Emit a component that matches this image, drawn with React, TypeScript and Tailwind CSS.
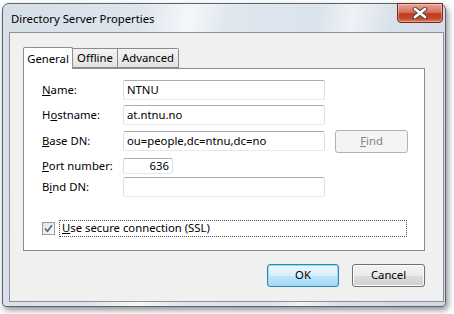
import React from "react";

const font = "font-['Segoe_UI','Noto_Sans','Open_Sans',sans-serif]";

function Field({ width = "w-[202px]", value = "", align = "text-left", height = "h-[20px]" }) {
  return (
    <div
      className={`${width} ${height} flex items-center rounded-[2px] border border-[#abadb3] border-l-[#dbdfe6] border-r-[#dbdfe6] border-b-[#e3e9ef] bg-white px-[3px] ${align}`}
    >
      <span className="w-full leading-none">{value}</span>
    </div>
  );
}

function Label({ children }: { children: React.ReactNode }) {
  return <div className="w-[81px] shrink-0">{children}</div>;
}

function CloseGlyph() {
  return (
    <svg width="16" height="12" viewBox="0 0 16 12">
      <path d="M3 2 L13 10 M13 2 L3 10" stroke="#4a4a4a" strokeWidth="4.6" strokeLinecap="round" />
      <path d="M3 2 L13 10 M13 2 L3 10" stroke="#ffffff" strokeWidth="2.6" strokeLinecap="round" />
    </svg>
  );
}

export default function App() {
  return (
    <div className={`h-[314px] w-[454px] overflow-hidden bg-white pl-[2px] pt-[3px] text-[11.3px] text-black ${font}`}>
      <div className="flex h-[304px] w-[444px] flex-col rounded-t-[7px] rounded-b-[4px] border border-[#5b6570] bg-[linear-gradient(100deg,#d6dee8_0%,#dee5ed_28%,#f4f7fa_38%,#e0e7ef_46%,#dbe3ec_64%,#eef2f6_71%,#d9e1ea_79%,#d0d9e4_100%)] shadow-[2px_3px_6px_rgba(0,0,0,0.45)]">
        {/* title bar */}
        <div className="flex h-[28px] shrink-0 items-start justify-between">
          <span className="pl-[8px] pt-[7px] text-[11.3px] text-black">Directory Server Properties</span>
          <button
            type="button"
            className="mr-[2px] -mt-px flex h-[20px] w-[46px] items-center justify-center rounded-b-[4px] border border-[#6e2a20] bg-[linear-gradient(180deg,#e9a597_0%,#d9715c_45%,#c2391d_55%,#c8472b_80%,#dc7a5c_100%)] shadow-[inset_0_0_0_1px_rgba(255,255,255,0.35)]"
          >
            <CloseGlyph />
          </button>
        </div>

        {/* client area */}
        <div className="mb-[4px] ml-[6px] mr-[1px] flex flex-1 flex-col border border-[#8b9097] bg-[#f0f0f0] pl-[13px] pt-[14px]">
          {/* tabs */}
          <div className="relative z-10 flex h-[21px] items-end">
            <div className="-mb-px flex h-[22px] w-[50px] items-start justify-center rounded-t-[2px] border border-b-0 border-[#898c95] bg-white pt-[3px]">
              General
            </div>
            <div className="flex h-[20px] w-[45px] items-center justify-center border border-l-0 border-[#898c95] bg-[linear-gradient(180deg,#f3f3f3,#e2e2e2)]">
              Offline
            </div>
            <div className="flex h-[20px] w-[61px] items-center justify-center rounded-tr-[2px] border border-l-0 border-[#898c95] bg-[linear-gradient(180deg,#f3f3f3,#e2e2e2)]">
              Advanced
            </div>
          </div>

          {/* panel */}
          <div className="flex h-[183px] w-[402px] flex-col border border-[#898c95] bg-white pl-[18px] pt-[11px]">
            <div className="flex h-[20px] items-center">
              <Label>
                <u>N</u>ame:
              </Label>
              <Field value="NTNU" />
            </div>
            <div className="mt-[5px] flex h-[20px] items-center">
              <Label>
                H<u>o</u>stname:
              </Label>
              <Field value="at.ntnu.no" />
            </div>
            <div className="mt-[6px] flex h-[20px] items-center">
              <Label>
                <u>B</u>ase DN:
              </Label>
              <Field value="ou=people,dc=ntnu,dc=no" />
              <button
                type="button"
                className="ml-[10px] h-[23px] w-[73px] rounded-[3px] border border-[#adb2b5] bg-[#f4f4f4] text-[#838383]"
              >
                <u>F</u>ind
              </button>
            </div>
            <div className="mt-[7px] flex h-[16px] items-center">
              <Label>
                <u>P</u>ort number:
              </Label>
              <Field width="w-[50px]" height="h-[16px]" value="636" align="text-right" />
            </div>
            <div className="mt-[3px] flex h-[20px] items-center">
              <Label>
                B<u>i</u>nd DN:
              </Label>
              <Field />
            </div>
            <div className="mt-[23px] flex h-[17px] items-center">
              <div className="flex h-[13px] w-[13px] shrink-0 items-center justify-center border border-[#9a9a9a] bg-[linear-gradient(135deg,#e2e2e2,#fbfbfb)]">
                <svg width="9" height="9" viewBox="0 0 9 9">
                  <path d="M1 4.5 L3.5 7.2 L8 1.2" fill="none" stroke="#4d6185" strokeWidth="1.6" />
                </svg>
              </div>
              <div className="ml-[4px] flex h-[17px] w-[348px] items-center border border-dotted border-[#555] pl-[2px]">
                <u>U</u>se secure connection (SSL)
              </div>
            </div>
          </div>

          {/* buttons */}
          <div className="mt-[13px] flex w-[402px] justify-end gap-[13px]">
            <button
              type="button"
              className="h-[23px] w-[72px] rounded-[3px] border border-[#3c7fb1] bg-[linear-gradient(180deg,#eaf6fd_0%,#d9f0fc_50%,#bee6fd_50%,#a7d9f5_100%)] shadow-[inset_0_0_0_1px_#8fdcf8]"
            >
              OK
            </button>
            <button
              type="button"
              className="h-[23px] w-[73px] rounded-[3px] border border-[#707070] bg-[linear-gradient(180deg,#f2f2f2_0%,#ebebeb_50%,#dddddd_50%,#cfcfcf_100%)] shadow-[inset_0_0_0_1px_#fcfcfc]"
            >
              Cancel
            </button>
          </div>
        </div>
      </div>
    </div>
  );
}
